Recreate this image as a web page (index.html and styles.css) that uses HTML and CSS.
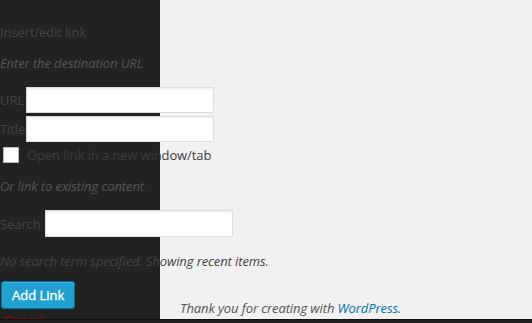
FILE: index.html
```html
<!DOCTYPE html>
<html lang="en">
<head>
  <meta charset="UTF-8">
  <title>Insert/edit link</title>
  <link rel="stylesheet" href="styles.css">
</head>
<body>
  <div class="frame">
    <aside class="adminmenu"></aside>
    <main class="content">
      <p class="footer-thanks">Thank you for creating with <a href="#">WordPress</a>.</p>
    </main>

    <form class="link-dialog">
      <div class="dialog-title">Insert/edit link</div>
      <p class="howto first">Enter the destination URL</p>
      <div class="field-row url-row">
        <label for="url-field">URL</label><input id="url-field" class="text-field" type="text">
      </div>
      <div class="field-row">
        <label for="title-field">Title</label><input id="title-field" class="text-field tight" type="text">
      </div>
      <div class="check-row">
        <input id="target-check" type="checkbox"><label for="target-check">Open link in a new window/tab</label>
      </div>
      <p class="howto second">Or link to existing content</p>
      <div class="field-row search-row">
        <label for="search-field">Search</label><input id="search-field" class="text-field" type="text">
      </div>
      <p class="howto third">No search term specified. Showing recent items.</p>
      <button type="button" class="button-primary">Add Link</button>
      <a class="cancel" href="#">Cancel</a>
    </form>
  </div>
  <div class="bottom-bar"></div>
</body>
</html>
```

FILE: styles.css
```css
html, body {
  margin: 0;
  height: 100%;
}
body {
  font-family: "Open Sans", "Liberation Sans", sans-serif;
  font-size: 13px;
  color: #333;
  background: #f1f1f1;
  overflow: hidden;
}
.frame {
  position: relative;
  height: 319px;
  overflow: hidden;
  display: grid;
  grid-template-columns: 160px 1fr;
}
.adminmenu {
  background: #222;
}
.content {
  display: flex;
  flex-direction: column;
  justify-content: flex-end;
  padding: 0 20px;
}
.footer-thanks {
  margin: 0 0 2px;
  line-height: 18px;
  font-style: italic;
  color: #555;
  letter-spacing: -0.1px;
}
.footer-thanks a {
  color: #0073aa;
  text-decoration: none;
}
.bottom-bar {
  height: 4px;
  background: #222;
  border-top: 1px solid #111;
}

/* the dialog sits on top of the menu and content */
.link-dialog {
  position: absolute;
  top: 0;
  left: 0;
  width: 300px;
  letter-spacing: -0.1px;
}
.dialog-title {
  margin-top: 23px;
  line-height: 18px;
  color: #444;
}
.howto {
  margin: 0;
  line-height: 18px;
  font-style: italic;
  color: #555;
}
.howto.first { margin-top: 13px; }
.howto.second { margin-top: 14px; }
.howto.third {
  margin-top: 15px;
  color: #444;
}
.field-row {
  display: flex;
  align-items: center;
  margin-top: 3px;
}
.field-row.url-row { margin-top: 15px; }
.field-row label {
  color: #444;
}
.text-field {
  box-sizing: border-box;
  width: 188px;
  height: 26px;
  margin: 0 0 0 2px;
  padding: 3px 5px;
  border: 1px solid #ddd;
  background: #fff;
  box-shadow: inset 0 1px 2px rgba(0, 0, 0, 0.07);
  font: inherit;
}
.text-field.tight { margin-left: 1px; }
.search-row { margin-top: 15px; }
.search-row .text-field {
  margin-left: 4px;
  height: 27px;
}
.check-row {
  display: flex;
  align-items: center;
  margin-top: 5px;
  height: 16px;
}
.check-row input {
  appearance: none;
  box-sizing: border-box;
  width: 16px;
  height: 16px;
  margin: 0 8px 0 3px;
  border: 1px solid #b4b9be;
  background: #fff;
}
.check-row label {
  color: #3c3c3c;
}
.button-primary {
  display: block;
  margin: 11px 0 0 1px;
  height: 28px;
  padding: 0 10px 1px;
  border: 1px solid #0074a2;
  border-radius: 3px;
  background: #21a0d2;
  box-shadow: inset 0 1px 0 rgba(120, 200, 230, 0.5);
  color: #fff;
  font: inherit;
  font-size: 13px;
  -webkit-text-stroke: 0.3px #fff;
}
.cancel {
  display: block;
  margin: 2px 0 0 3px;
  color: #a00;
  line-height: 18px;
}
```
